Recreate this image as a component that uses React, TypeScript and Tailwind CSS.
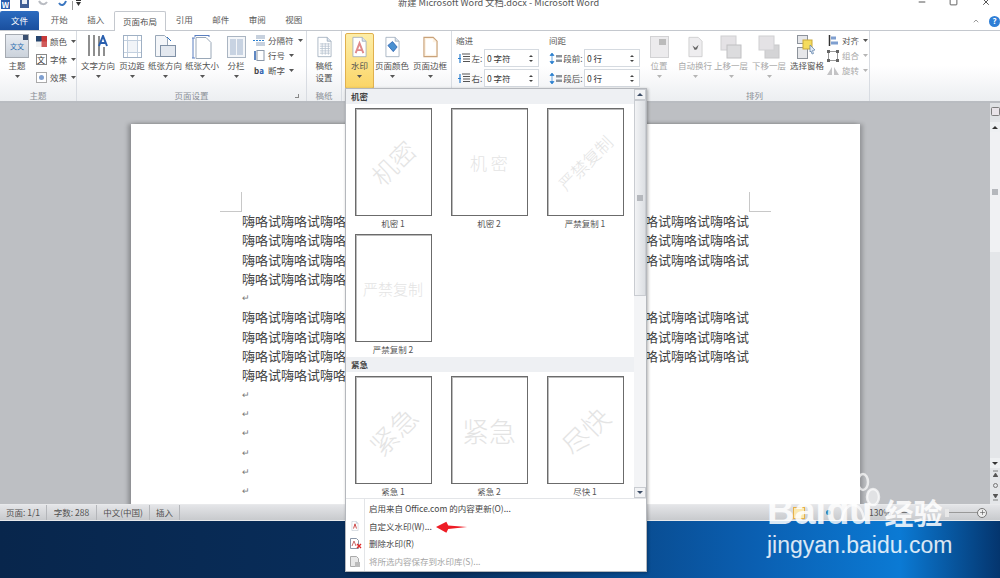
import type { ReactNode } from "react";
import { ChevronDown, Minus, Square, X, Plus } from "lucide-react";

const uiFont = "font-['Noto_Sans_CJK_SC','Noto_Sans',sans-serif]";

const tabs = ["开始", "插入", "页面布局", "引用", "邮件", "审阅", "视图"];
const fullLine = "嗨咯试".repeat(13);
const shortLine = "嗨咯试".repeat(8);

// tiny dropdown triangle used all over the ribbon
function Caret({ faded }: { faded?: boolean }) {
  return (
    <svg width="5" height="3" viewBox="0 0 5 3" className="shrink-0">
      <path d="M0 0h5L2.5 3z" fill={faded ? "#b5b5b5" : "#555"} />
    </svg>
  );
}

function PageIcon({ children, w = 22, h = 26 }: { children?: ReactNode; w?: number; h?: number }) {
  return (
    <svg width={w} height={h} viewBox="0 0 22 26">
      <path d="M2.5.5h12l5 5v20h-17z" fill="#fff" stroke="#98a6b8" />
      <path d="M14.500.5v5h5" fill="#dbe4ef" stroke="#98a6b8" />
      {children}
    </svg>
  );
}

function BigButton({
  label,
  icon,
  width,
  second,
  caret = true,
  faded,
  active,
}: {
  label: string;
  icon: ReactNode;
  width: number;
  second?: string;
  caret?: boolean;
  faded?: boolean;
  active?: boolean;
}) {
  return (
    <div
      style={{ width }}
      className={`flex shrink-0 flex-col items-center rounded-[2px] ${
        active
          ? "mt-[2px] h-[56px] border border-[#e0b04e] bg-gradient-to-b from-[#fdeea8] to-[#fbd566]"
          : "h-[60px] pt-[3px]"
      }`}
    >
      <div className="flex h-[25px] items-center justify-center">{icon}</div>
      <span className={`whitespace-nowrap text-[8.5px] leading-[12px] ${faded ? "text-[#a8a8a8]" : "text-[#505050]"}`}>
        {label}
      </span>
      {second && <span className="whitespace-nowrap text-[8.5px] leading-[12px] text-[#505050]">{second}</span>}
      {caret && (
        <div className="mt-[4px] leading-none">
          <Caret faded={faded} />
        </div>
      )}
    </div>
  );
}

function SmallButton({ label, icon, faded }: { label: string; icon: ReactNode; faded?: boolean }) {
  return (
    <div className="flex h-[15px] items-center gap-[2px] whitespace-nowrap">
      <div className="flex w-[14px] justify-center">{icon}</div>
      <span className={`text-[8.5px] ${faded ? "text-[#a8a8a8]" : "text-[#505050]"}`}>{label}</span>
      <div className="ml-[2px]">
        <Caret faded={faded} />
      </div>
    </div>
  );
}

function Group({ label, width, children, launcher }: { label?: string; width: number; children: ReactNode; launcher?: boolean }) {
  return (
    <div style={{ width }} className="flex h-full shrink-0 flex-col border-r border-[#d8dce2]">
      <div className="flex h-[60px] items-start">{children}</div>
      <div className="flex h-[9px] items-center justify-center">
        <span className="text-[8.5px] leading-[9px] text-[#8a8f96]">{label}</span>
        {launcher && <div className="absolute ml-[210px] h-[4px] w-[4px] border-b border-r border-[#888]" />}
      </div>
    </div>
  );
}

function Spinner({ label, value, icon, labelWidth, inputWidth }: { label: string; value: string; icon: ReactNode; labelWidth: number; inputWidth: number }) {
  return (
    <div className="flex h-[18px] items-center">
      <div className="flex w-[14px] justify-center">{icon}</div>
      <span style={{ width: labelWidth }} className="whitespace-nowrap text-center text-[8.5px] text-[#505050]">
        {label}
      </span>
      <div style={{ width: inputWidth }} className="flex h-[18px] items-center justify-between border border-[#d5dae0] bg-white pl-[2px] pr-[5px]">
        <span className="text-[8.5px] text-[#333]">{value}</span>
        <div className="flex flex-col gap-[3px]">
          <svg width="4" height="2" viewBox="0 0 4 2"><path d="M0 2h4L2 0z" fill="#444" /></svg>
          <svg width="4" height="2" viewBox="0 0 4 2"><path d="M0 0h4L2 2z" fill="#444" /></svg>
        </div>
      </div>
    </div>
  );
}

function IndentIcon() {
  return (
    <svg width="13" height="11" viewBox="0 0 13 11">
      <path d="M5 1h8M6 3.500h7M6 6h7M6 8.500h7" stroke="#555" strokeWidth="1" />
      <path d="M3 1v9M1 5.500h3" stroke="#2a7fd0" strokeWidth="1.200" />
    </svg>
  );
}

function SpacingIcon() {
  return (
    <svg width="13" height="11" viewBox="0 0 13 11">
      <path d="M7 2h6v2.500H7zM7 6.500h6V9H7z" fill="#8b939c" />
      <path d="M3 0l2 2.500H1zM3 11L1 8.500h4zM3 2v7" fill="#2a7fd0" stroke="#2a7fd0" strokeWidth=".7" />
    </svg>
  );
}

function ArrangeIcon({ front }: { front?: boolean }) {
  return (
    <svg width="22" height="24" viewBox="0 0 22 24">
      {front ? (
        <>
          <rect x="7" y="10" width="14" height="13" fill="#d4d4d6" stroke="#c8c8ca" />
          <rect x="1" y="1" width="15" height="14" fill="#e4e2e5" stroke="#d0d0d2" />
        </>
      ) : (
        <>
          <rect x="1" y="1" width="15" height="14" fill="#e4e2e5" stroke="#d0d0d2" />
          <rect x="7" y="10" width="14" height="13" fill="#dcdcde" stroke="#c0c0c2" />
        </>
      )}
    </svg>
  );
}

function ThumbnailCard({ caption, mark, rotate, size = 25 }: { caption: string; mark: string; rotate: string; size?: number }) {
  return (
    <div className="flex w-[96px] flex-col items-center">
      <div className="flex h-[108px] w-[77px] items-center justify-center overflow-hidden border border-[#6b6b6b] bg-white shadow-[inset_1px_1px_0_#bbb]">
        <span
          style={{ fontSize: size }}
          className={`whitespace-nowrap font-['Noto_Sans_CJK_SC',sans-serif] font-light leading-none text-[#e4e4e4] ${rotate}`}
        >
          {mark}
        </span>
      </div>
      <span className="mt-[1px] whitespace-nowrap text-[8.5px] leading-[12px] text-[#555]">{caption}</span>
    </div>
  );
}

function MenuRow({ label, icon, faded }: { label: string; icon?: ReactNode; faded?: boolean }) {
  return (
    <div className="flex h-[17.5px] items-center">
      <div className="flex w-[18px] justify-center">{icon}</div>
      <span className={`ml-[5px] whitespace-nowrap text-[8.5px] ${faded ? "text-[#a5a5a5]" : "text-[#454545]"}`}>{label}</span>
    </div>
  );
}

function WatermarkMenu() {
  return (
    <div className="absolute left-[345px] top-[88px] z-20 flex h-[484px] w-[302px] flex-col border border-[#b5b8bd] bg-white shadow-[1px_1px_3px_rgba(0,0,0,.3)]">
      <div className="flex min-h-0 flex-1">
        <div className="flex-1 overflow-hidden">
          <div className="flex h-[15px] items-center bg-[#eef0f3] pl-[5px] text-[8.5px] font-bold text-[#444]">机密</div>
          <div className="-ml-[1px] flex w-[289px] flex-wrap gap-y-[5px] pt-[4px]">
            <ThumbnailCard caption="机密 1" mark="机密" rotate="-rotate-45" size={25} />
            <ThumbnailCard caption="机密 2" mark="机 密" rotate="" size={17} />
            <ThumbnailCard caption="严禁复制 1" mark="严禁复制" rotate="-rotate-45" size={17} />
            <ThumbnailCard caption="严禁复制 2" mark="严禁复制" rotate="" size={15} />
          </div>
          <div className="mt-[2px] flex h-[15px] items-center bg-[#eef0f3] pl-[5px] text-[8.5px] font-bold text-[#444]">紧急</div>
          <div className="-ml-[1px] flex pt-[4px]">
            <ThumbnailCard caption="紧急 1" mark="紧急" rotate="-rotate-45" size={27} />
            <ThumbnailCard caption="紧急 2" mark="紧急" rotate="" size={27} />
            <ThumbnailCard caption="尽快 1" mark="尽快" rotate="-rotate-45" size={27} />
          </div>
        </div>
        {/* gallery scrollbar */}
        <div className="flex w-[12px] shrink-0 flex-col bg-[#f3f4f6]">
          <div className="flex h-[11px] items-center justify-center border border-[#c9ccd1] bg-[#f2f3f5]">
            <svg width="6" height="3" viewBox="0 0 6 3"><path d="M0 3h6L3 0z" fill="#3c4d66" /></svg>
          </div>
          <div className="flex h-[196px] items-center justify-center border border-[#c9ccd1] bg-gradient-to-r from-[#f2f3f5] to-[#dcdfe3]">
            <div className="h-[6px] w-[6px] bg-[#b5b8bd]" />
          </div>
          <div className="flex-1" />
          <div className="flex h-[11px] items-center justify-center border border-[#c9ccd1] bg-[#f2f3f5]">
            <svg width="6" height="3" viewBox="0 0 6 3"><path d="M0 0h6L3 3z" fill="#3c4d66" /></svg>
          </div>
        </div>
      </div>
      <div className="relative h-[73px] shrink-0 border-t border-[#e3e5e8] pt-[1px]">
        <div className="absolute bottom-0 left-[18px] top-0 w-px bg-[#e3e5e8]" />
        <MenuRow label="启用来自 Office.com 的内容更新(O)..." />
        <MenuRow
          label="自定义水印(W)..."
          icon={
            <PageIcon w={8} h={10}>
              <path d="M7 20l4-13 4 13" fill="none" stroke="#c83a3a" strokeWidth="2.500" />
            </PageIcon>
          }
        />
        <MenuRow
          label="删除水印(R)"
          icon={
            <svg width="13" height="11" viewBox="0 0 13 11">
              <path d="M1.500.5h6l2 2v8h-8z" fill="#fff" stroke="#8b97a8" />
              <path d="M3 8l2-5 2 5" fill="none" stroke="#c86a6a" />
              <path d="M8 6l4 4M12 6l-4 4" stroke="#e02a2a" strokeWidth="1.400" />
            </svg>
          }
        />
        <MenuRow
          label="将所选内容保存到水印库(S)..."
          faded
          icon={
            <svg width="12" height="11" viewBox="0 0 12 11">
              <path d="M1.500.5h6l2 2v8h-8z" fill="#e8e8e8" stroke="#aaa" />
              <rect x="6" y="6" width="5" height="5" fill="#bbb" />
            </svg>
          }
        />
        {/* annotation arrow from the screenshot author */}
        <svg width="32" height="14" viewBox="0 0 34 14" className="absolute left-[90px] top-[21px]">
          <path d="M0 7L11 1.500 13 5.500 33 7 13 9 11 13z" fill="#ee1c25" />
        </svg>
      </div>
    </div>
  );
}

function BaiduMark() {
  return (
    <div className="pointer-events-none absolute left-[767px] top-[470px] z-30 flex w-[200px] flex-col font-['Liberation_Sans',sans-serif] text-white/85">
      <div className="flex h-[60px] items-end">
        <span className="text-[38px] font-bold leading-[38px]">Bai</span>
        <span className="text-[38px] font-bold leading-[38px] text-white/80">du</span>
        <span className="mb-[2px] ml-[12px] font-['Noto_Sans_CJK_SC',sans-serif] text-[29px] font-bold leading-[32px]">经验</span>
      </div>
      <span className="mt-[2px] whitespace-nowrap text-[23px] leading-[26px]">jingyan.baidu.com</span>
      <svg width="62" height="56" viewBox="0 0 62 56" className="absolute left-[55px] top-0" fill="none" stroke="#fff" strokeOpacity=".7" strokeWidth="2.500">
        <ellipse cx="7" cy="18" rx="5" ry="8" />
        <ellipse cx="25" cy="9" rx="5" ry="8" />
        <ellipse cx="41" cy="12" rx="5" ry="8" />
        <ellipse cx="51" cy="27" rx="6" ry="8" fill="#fff" fillOpacity=".55" />
        <path d="M20 50C22 30 40 30 42 50" />
      </svg>
    </div>
  );
}

export default function App() {
  return (
    <div className={`relative flex h-[578px] w-[1000px] flex-col overflow-hidden bg-white ${uiFont}`}>
      {/* title bar, cut off at the top of the screenshot */}
      <div className="flex h-[12px] shrink-0 items-start overflow-hidden bg-white">
        <div className="flex w-[90px] shrink-0 items-start">
          <div className="ml-[1px] flex h-[9px] w-[9px] items-end justify-center bg-[#2a5fae] text-[8px] font-bold leading-[9px] text-white">W</div>
          <svg width="10" height="9" viewBox="0 0 10 9" className="ml-[10px]">
            <rect width="9" height="8" fill="#3f5f96" />
            <rect x="2" width="5" height="4" fill="#e8eef6" />
          </svg>
          <svg width="13" height="7" viewBox="0 0 13 7" className="ml-[8px]">
            <path d="M1 1c2 4 6 4 8 1" fill="none" stroke="#b9bcc2" strokeWidth="2" />
          </svg>
          <svg width="10" height="8" viewBox="0 0 10 8" className="ml-[7px]">
            <path d="M8 1C6 6 3 6 1 3" fill="none" stroke="#3a76c0" strokeWidth="2" />
          </svg>
          <div className="ml-[4px] mt-[1px] h-[9px] w-px bg-[#9a9a9a]" />
          <svg width="5" height="6" viewBox="0 0 5 6" className="ml-[3px]">
            <path d="M0 0h5v1H0zM0 2h5L2.500 6z" fill="#333" />
          </svg>
        </div>
        <span className="ml-[308px] mt-[-4px] whitespace-nowrap text-[9.200px] leading-[12px] text-[#555]">
          新建 Microsoft Word 文档.docx - Microsoft Word
        </span>
        <div className="ml-auto flex items-start pr-[9px] text-[#333]">
          <Minus size={10} className="-mt-[3px]" />
          <Square size={9} className="-mt-[3px] ml-[22px]" />
          <X size={10} className="-mt-[3px] ml-[23px]" />
        </div>
      </div>

      {/* tab row */}
      <div className="flex h-[19px] shrink-0 items-end border-b border-[#c4c8ce] bg-white">
        <div className="flex h-[19px] w-[39px] items-center justify-center rounded-t-[2px] bg-gradient-to-b from-[#2c6cc0] to-[#1a4f9e] text-[8.5px] text-white">
          文件
        </div>
        <div className="ml-[2px] flex">
          {tabs.map((tab) =>
            tab === "页面布局" ? (
              <div
                key={tab}
                className="relative top-px flex h-[20px] w-[52px] items-center justify-center rounded-t-[2px] border border-b-0 border-[#c4c8ce] bg-white text-[8.5px] text-[#505050]"
              >
                {tab}
              </div>
            ) : (
              <div key={tab} className="flex h-[19px] w-[36.500px] items-center justify-center text-[8.5px] text-[#5a5a5a]">
                {tab}
              </div>
            ),
          )}
        </div>
        <div className="flex flex-1 items-center justify-end gap-[9px] self-center">
          <ChevronDown size={8} className="rotate-180 text-[#666]" />
          <div className="flex h-[11px] w-[11px] items-center justify-center rounded-full bg-[#2f7fd6] text-[8px] font-bold text-white">?</div>
        </div>
      </div>

      {/* ribbon */}
      <div className="flex h-[72px] shrink-0 border-b-2 border-[#b9bcc1] bg-gradient-to-b from-white via-white to-[#eceef1]">
        <Group label="主题" width={77}>
          <div className="ml-[5px] flex w-[24px] flex-col items-center pt-[3px]">
            <div className="relative flex h-[24px] w-[24px] items-center justify-center border border-[#a5aab1] bg-gradient-to-b from-[#e8ecf2] to-[#cbd2db] text-[7px] leading-[8px] text-[#2e6fb0]">
              文文
              <div className="absolute right-0 top-0 h-[5px] w-[5px] bg-[#3a4f70]" />
            </div>
            <span className="mt-[1px] text-[8.5px] leading-[12px] text-[#505050]">主题</span>
            <div className="mt-[4px] leading-none"><Caret /></div>
          </div>
          <div className="ml-[5px] flex flex-col gap-[3px] pt-[3px]">
            <SmallButton
              label="颜色"
              icon={
                <svg width="11" height="11" viewBox="0 0 11 11">
                  <rect width="6" height="6" fill="#26456e" />
                  <rect x="5.500" width="5.500" height="6" fill="#c83a3a" />
                  <rect y="5.500" width="6" height="5.500" fill="#f2f2f2" />
                  <rect x="5.500" y="5.500" width="5.500" height="5.500" fill="#d05a5a" />
                </svg>
              }
            />
            <SmallButton
              label="字体"
              icon={<div className="flex h-[11px] w-[11px] items-center justify-center border border-[#888] text-[8px] leading-none text-[#333]">文</div>}
            />
            <SmallButton
              label="效果"
              icon={
                <div className="flex h-[11px] w-[11px] items-center justify-center border border-[#aaa] bg-white">
                  <div className="h-[5px] w-[5px] rounded-full bg-[#7f9fd0]" />
                </div>
              }
            />
          </div>
        </Group>

        <Group label="页面设置" width={230} launcher>
          <div className="ml-[3px] flex">
            <BigButton
              width={36}
              label="文字方向"
              icon={
                <svg width="22" height="24" viewBox="0 0 22 24">
                  <path d="M2 0v21M7 0v21M12 1v20M17 12v9" stroke="#444" strokeWidth="1.200" />
                  <path d="M12 11L16 1l4 10M13.500 8h5" fill="none" stroke="#2a5fae" strokeWidth="2" />
                </svg>
              }
            />
            <BigButton
              width={32}
              label="页边距"
              icon={
                <svg width="19" height="23" viewBox="0 0 19 23">
                  <rect x=".5" y=".5" width="18" height="22" fill="#fff" stroke="#9fb0c4" />
                  <path d="M4.500 1v21M14.500 1v21M1 5.500h17M1 17.500h17" stroke="#c3d0df" />
                  <rect x="5" y="6" width="9" height="11" fill="#f1f4f8" />
                </svg>
              }
            />
            <BigButton
              width={34}
              label="纸张方向"
              icon={
                <svg width="22" height="23" viewBox="0 0 22 23">
                  <path d="M1.500.5h9l3 3v18h-12z" fill="#f4f6f9" stroke="#9aa8b8" />
                  <rect x="6.500" y="10.500" width="15" height="11" fill="#e3e8ef" stroke="#7f90a5" />
                  <path d="M13 2l4 4" stroke="#2a6fc0" />
                </svg>
              }
            />
            <BigButton
              width={40}
              label="纸张大小"
              icon={
                <svg width="20" height="24" viewBox="0 0 20 24">
                  <path d="M4 2.500h10l5 5v16H4z" fill="#fff" stroke="#9aa8b8" />
                  <path d="M1 3v20M0 3h3M0 23h3M3 .5h14M3 0v2M17 0v2" stroke="#5a7fc0" />
                </svg>
              }
            />
            <BigButton
              width={28}
              label="分栏"
              icon={
                <svg width="19" height="22" viewBox="0 0 19 22">
                  <rect x=".5" y=".5" width="18" height="21" fill="#f4f6f9" stroke="#aab5c2" />
                  <rect x="3" y="3" width="6" height="16" fill="#c8d3e2" />
                  <rect x="10" y="3" width="6" height="16" fill="#c8d3e2" />
                </svg>
              }
            />
          </div>
          <div className="ml-[2px] flex flex-col pt-[2px]">
            <SmallButton
              label="分隔符"
              icon={
                <svg width="12" height="11" viewBox="0 0 12 11">
                  <path d="M3 0h9v4H3zM3 7h9v4H3z" fill="#c7d1de" />
                  <path d="M0 5.500h12" stroke="#2a7fd0" strokeDasharray="2 1" />
                </svg>
              }
            />
            <SmallButton
              label="行号"
              icon={
                <svg width="12" height="11" viewBox="0 0 12 11">
                  <rect x="4" y=".5" width="7" height="10" fill="#fff" stroke="#8b97a8" />
                  <path d="M2 1v9" stroke="#2a5fae" strokeWidth="1.500" />
                </svg>
              }
            />
            <SmallButton label="断字" icon={<span className="text-[8px] font-bold leading-none text-[#444]">b<span className="text-[#2a5fae]">a</span></span>} />
          </div>
        </Group>

        <Group label="稿纸" width={35}>
          <BigButton
            width={34}
            label="稿纸"
            second="设置"
            caret={false}
            icon={
              <PageIcon w={17} h={22}>
                <path d="M5 9h13M5 12h13M5 15h13M5 18h13M5 21h13M8 8v15M12 8v15M16 8v15" stroke="#b5c0cd" />
              </PageIcon>
            }
          />
        </Group>

        <Group width={110}>
          <div className="ml-[3px]">
            <BigButton
              width={29}
              label="水印"
              active
              icon={
                <PageIcon w={17} h={22}>
                  <path d="M6 21l5-13 5 13M8 17h6" fill="none" stroke="#e08a8a" strokeWidth="2.500" />
                </PageIcon>
              }
            />
          </div>
          <BigButton
            width={36}
            label="页面颜色"
            icon={
              <PageIcon w={17} h={22}>
                <path d="M5 11l6-5 6 7-5 6z" fill="#4a90d0" stroke="#2a5fae" />
              </PageIcon>
            }
          />
          <BigButton
            width={40}
            label="页面边框"
            icon={
              <svg width="17" height="22" viewBox="0 0 22 26">
                <path d="M2.500.5h12l5 5v20h-17z" fill="#fdf2e2" stroke="#c9a27a" strokeWidth="1.500" />
                <path d="M5 3h9v4h4v16H5z" fill="#fff" />
              </svg>
            }
          />
        </Group>

        <div className="flex h-full w-[92px] shrink-0 flex-col gap-[2px] pl-[4px] pt-[3px]">
          <span className="h-[13px] text-[8.5px] leading-[13px] text-[#5a5a5a]">缩进</span>
          <Spinner label="左:" value="0 字符" icon={<IndentIcon />} labelWidth={14} inputWidth={55} />
          <Spinner label="右:" value="0 字符" icon={<IndentIcon />} labelWidth={14} inputWidth={55} />
        </div>
        <div className="flex h-full w-[96px] shrink-0 flex-col gap-[2px] pl-[4px] pt-[3px]">
          <span className="h-[13px] pl-[1px] text-[8.5px] leading-[13px] text-[#5a5a5a]">间距</span>
          <Spinner label="段前:" value="0 行" icon={<SpacingIcon />} labelWidth={22} inputWidth={56} />
          <Spinner label="段后:" value="0 行" icon={<SpacingIcon />} labelWidth={22} inputWidth={56} />
        </div>

        <Group label="排列" width={230}>
          <BigButton
            width={38}
            label="位置"
            faded
            icon={
              <svg width="19" height="22" viewBox="0 0 19 22">
                <rect x=".5" y=".5" width="18" height="21" fill="#ecebed" stroke="#d2d2d4" />
                <rect x="9" y="3" width="7" height="6" fill="#bbb" />
              </svg>
            }
          />
          <BigButton
            width={34}
            label="自动换行"
            faded
            icon={
              <svg width="17" height="22" viewBox="0 0 22 26">
                <path d="M2.500.5h12l5 5v20h-17z" fill="#eeedef" stroke="#c8c8ca" />
                <path d="M7 11l4 3 4-4-2 6-3 1z" fill="#666" />
              </svg>
            }
          />
          <BigButton width={38} label="上移一层" faded icon={<ArrangeIcon />} />
          <BigButton width={38} label="下移一层" faded icon={<ArrangeIcon front />} />
          <BigButton
            width={38}
            label="选择窗格"
            caret={false}
            icon={
              <svg width="20" height="24" viewBox="0 0 20 24">
                <rect x=".5" y=".5" width="10" height="8" fill="#e6e7ea" stroke="#8d939b" />
                <rect x=".5" y="12.500" width="10" height="11" fill="#e6e7ea" stroke="#8d939b" />
                <rect x="6" y="5" width="9" height="9" fill="#f5dc5c" stroke="#c9a93a" />
                <path d="M13 10l5 5-2.500.5 1 3-1.500.5-1-3L13 17z" fill="#dfe9f5" stroke="#5b7ea8" strokeWidth=".7" />
              </svg>
            }
          />
          <div className="flex flex-col pt-[2px]">
            <SmallButton
              label="对齐"
              icon={
                <svg width="11" height="11" viewBox="0 0 11 11">
                  <path d="M1.500 0v11" stroke="#333" strokeWidth="1.500" />
                  <rect x="3" y="1.500" width="5" height="3" fill="#7f9fd0" />
                  <rect x="3" y="6.500" width="7" height="3" fill="#7f9fd0" />
                </svg>
              }
            />
            <SmallButton
              label="组合"
              faded
              icon={
                <svg width="12" height="12" viewBox="0 0 12 12">
                  <rect x="1.500" y="1.500" width="9" height="9" fill="none" stroke="#999" />
                  <path d="M0 0h3v3H0zM9 0h3v3H9zM0 9h3v3H0zM9 9h3v3H9z" fill="#666" />
                </svg>
              }
            />
            <SmallButton
              label="旋转"
              faded
              icon={
                <svg width="12" height="9" viewBox="0 0 12 9">
                  <path d="M0 9l5-8v8zM7 9V1l5 8z" fill="#c3c3c5" />
                </svg>
              }
            />
          </div>
        </Group>
      </div>

      {/* document canvas */}
      <div className="flex min-h-0 flex-1 bg-[#bdbfc3]">
        <div className="min-w-0 flex-1 overflow-hidden pl-[131px] pt-[21px]">
          <div className="relative h-[400px] w-[729px] bg-white pl-[111px] pt-[87px] shadow-[-3px_0_4px_rgba(0,0,0,.25),3px_0_4px_rgba(0,0,0,.2)]">
            {/* crop marks */}
            <div className="absolute left-[89px] top-[68px] h-[20px] w-[22px] border-b border-r border-[#c8c8c8]" />
            <div className="absolute left-[618px] top-[68px] h-[20px] w-[22px] border-b border-l border-[#c8c8c8]" />
            <div className="font-['Noto_Sans_CJK_SC',serif] text-[13px] leading-[19.300px] text-[#444]">
              <div className="whitespace-nowrap">{fullLine}</div>
              <div className="whitespace-nowrap">{fullLine}</div>
              <div className="whitespace-nowrap">{fullLine}</div>
              <div className="whitespace-nowrap">{shortLine}</div>
              <div className="text-[9px] text-[#777]">↵</div>
              <div className="whitespace-nowrap">{fullLine}</div>
              <div className="whitespace-nowrap">{fullLine}</div>
              <div className="whitespace-nowrap">{fullLine}</div>
              <div className="whitespace-nowrap">{shortLine}</div>
              <div className="text-[9px] text-[#777]">↵</div>
              <div className="text-[9px] text-[#777]">↵</div>
              <div className="text-[9px] text-[#777]">↵</div>
              <div className="text-[9px] text-[#777]">↵</div>
              <div className="text-[9px] text-[#777]">↵</div>
              <div className="text-[9px] text-[#777]">↵</div>
            </div>
          </div>
        </div>
        {/* main scrollbar */}
        <div className="flex w-[10px] shrink-0 flex-col items-center bg-[#e4e6e9]">
          <div className="flex h-[17px] w-full items-center justify-center bg-[#dfe1e4]">
            <svg width="9" height="9" viewBox="0 0 9 9">
              <rect x=".5" y=".5" width="8" height="8" rx="1" fill="#e8e3e8" stroke="#7d7d7d" />
            </svg>
          </div>
          <div className="mt-[2px] flex h-[10px] w-full items-center justify-center bg-[#eef0f2]">
            <svg width="6" height="3" viewBox="0 0 6 3"><path d="M0 3h6L3 0z" fill="#333" /></svg>
          </div>
          <div className="h-[326px] w-full">
            <div className="flex h-[120px] w-full items-center justify-center bg-[#f0f1f3]">
              <div className="h-[6px] w-[6px] bg-[#b5b8bc]" />
            </div>
          </div>
          <div className="flex h-[10px] w-full items-center justify-center bg-[#eef0f2]">
            <svg width="6" height="3" viewBox="0 0 6 3"><path d="M0 0h6L3 3z" fill="#333" /></svg>
          </div>
          <div className="mt-[2px] flex flex-col items-center gap-[6px] text-[#555]">
            <svg width="5" height="7" viewBox="0 0 5 7"><path d="M0 1h5M0 7h5l-2.500-4z" stroke="#555" fill="#555" strokeWidth=".7" /></svg>
            <div className="h-[5px] w-[5px] rounded-full border border-[#777]" />
            <svg width="5" height="7" viewBox="0 0 5 7"><path d="M0 6h5M0 0h5L2.500 4z" stroke="#555" fill="#555" strokeWidth=".7" /></svg>
          </div>
        </div>
      </div>

      {/* status bar */}
      <div className="flex h-[17px] shrink-0 items-center border-y border-[#e8e9eb] bg-gradient-to-b from-[#e4e5e8] to-[#c8cacd] text-[8.5px] text-[#505050]">
        <div className="flex h-full w-[47px] items-center justify-center border-r border-[#b4b6ba]">页面: 1/1</div>
        <div className="flex h-full w-[50px] items-center justify-center border-r border-[#b4b6ba]">字数: 288</div>
        <div className="flex h-full w-[53px] items-center justify-center border-r border-[#b4b6ba]">中文(中国)</div>
        <div className="flex h-full w-[30px] items-center justify-center border-r border-[#b4b6ba]">插入</div>
        <div className="flex-1" />
        <div className="flex items-center pr-[13px]">
          <div className="h-[12px] w-[12px] border border-[#e5b04a] bg-[#fbe9b0]" />
          <div className="ml-[21px] h-[5px] w-[5px] rounded-full bg-[#2a7fb0]" />
          <span className="ml-[38px] text-[8.5px]">130%</span>
          <Minus size={9} className="ml-[9px]" />
          <div className="ml-[36px] h-[8px] w-[4px] bg-[#e8e8e8]" />
          <div className="h-px w-[28px] bg-[#999]" />
          <div className="flex h-[10px] w-[10px] items-center justify-center rounded-full border border-[#777] bg-[#eee]">
            <Plus size={7} />
          </div>
        </div>
      </div>

      {/* desktop wallpaper behind the window */}
      <div className="h-[57px] shrink-0 bg-[linear-gradient(90deg,#08264c_0%,#082f5e_45%,#0a5eb0_75%,#0b7ad4_90%,#04356e_100%)]" />

      <WatermarkMenu />
      <BaiduMark />
    </div>
  );
}
